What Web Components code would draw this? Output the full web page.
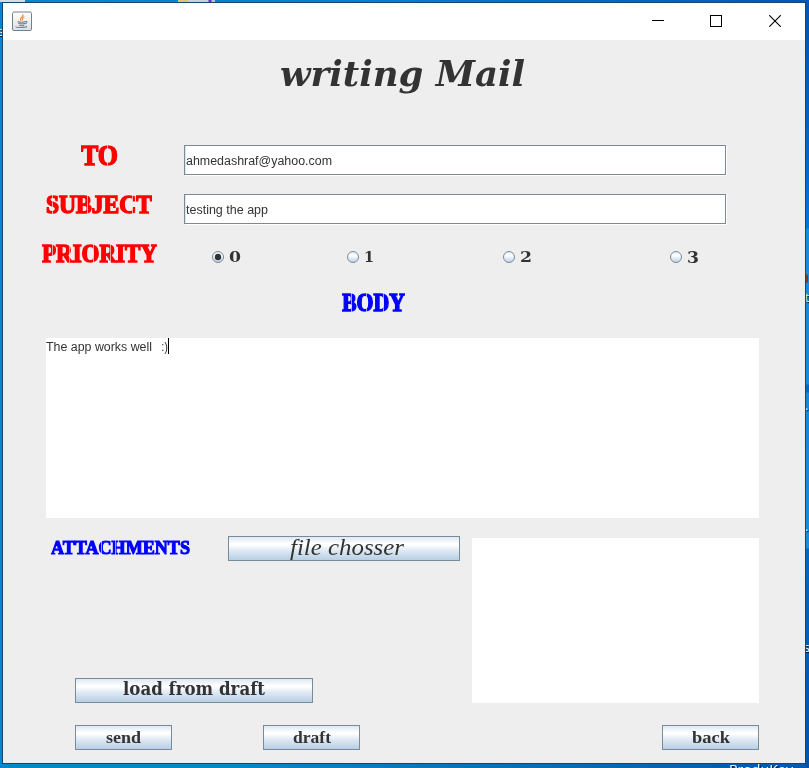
<!DOCTYPE html>
<html lang="en"><head><meta charset="utf-8"><title>writing Mail</title>
<style>html,body{margin:0;width:809px;height:768px;overflow:hidden}</style></head>
<body><mail-desktop></mail-desktop>
<script>
function define(name, html, ready){
  customElements.define(name, class extends HTMLElement{
    connectedCallback(){
      if(this.shadowRoot) return;
      this.attachShadow({mode:'open'}).innerHTML=html;
      if(ready) ready(this,this.shadowRoot);
    }
  });
}

// Text stretched horizontally to a given width; optional stencil cuts in px.
define('fit-text',`<style>
:host{display:block;height:var(--line,25px);line-height:var(--line,25px);white-space:pre;flex:none}
span{display:inline-block;transform-origin:0 50%}
</style><span><slot></slot></span>`,(el,root)=>{
  const s=root.querySelector('span'), w=+el.getAttribute('w');
  el.style.width=w+'px';
  if(el.hasAttribute('size')) el.style.fontSize=el.getAttribute('size')+'px';
  const k=w/s.getBoundingClientRect().width;
  s.style.transform='scaleX('+k+')';
  const cuts=(el.getAttribute('cuts')||'').split(' ').filter(Boolean).map(Number);
  if(cuts.length){
    let stops=['#000 0'];
    cuts.forEach(c=>stops.push('#000 '+(c-.5)+'px','rgba(0,0,0,.35) '+(c-.5)+'px','rgba(0,0,0,.35) '+(c+.5)+'px','#000 '+(c+.5)+'px'));
    el.style.maskImage='linear-gradient(90deg,'+stops.join(',')+')';
  }
});

define('stencil-label',`<style>
:host{display:block;flex:none;font-family:"Liberation Serif",serif;font-weight:700;-webkit-text-stroke:1.5px currentColor;color:#f00}
:host([blue]){color:#00f}
</style><slot></slot>`);

define('text-field',`<style>
:host{display:flex;align-items:center;box-sizing:border-box;width:542px;height:30px;border:1px solid #7a8a99;box-shadow:1px 1px #fff,inset 1px 0 #dfe6ee;background:#fff;padding:3px 0 0 1px;font:12px "Liberation Sans",sans-serif;color:#333;flex:none}
</style><slot></slot>`);

define('radio-option',`<style>
:host{display:flex;align-items:center;gap:5px;height:14px;flex:none;font:bold 15px "DejaVu Serif",serif;color:#333}
svg{display:block;width:12px;height:12px;flex:none}
.dot{display:none}:host([checked]) .dot{display:block}
</style><svg viewBox="0 0 12 12"><defs><linearGradient id="g" x2="0" y2="1"><stop stop-color="#dde8f3"/><stop offset=".35" stop-color="#fff"/><stop offset="1" stop-color="#b8cfe5"/></linearGradient></defs><circle cx="6" cy="6" r="5.5" fill="url(#g)" stroke="#7a8a99"/><circle class="dot" cx="6" cy="6" r="3.2" fill="#333"/></svg><slot></slot>`);

define('metal-button',`<style>
:host{display:flex;justify-content:center;box-sizing:border-box;width:97px;height:25px;border:1px solid #7a8a99;background:linear-gradient(#dde8f3 0,#fff 30%,#fff 34%,#dde8f3 60%,#b8cfe5 100%);font:bold 17.5px "Liberation Serif",serif;color:#333;flex:none}
</style><slot></slot>`);

define('title-bar',`<style>
:host{display:flex;height:37px;background:#fff;align-items:center;justify-content:space-between;padding:0 24px 0 9px;box-sizing:border-box}
svg{display:block}.tools{display:flex;gap:46px;margin-bottom:1px}.tools svg:last-child{margin-left:1px}
</style>
<svg width="20" height="20" viewBox="0 0 20 20" style="margin-bottom:2px"><defs><linearGradient id="j" x2="0" y2="1"><stop stop-color="#fff"/><stop offset="1" stop-color="#dedfe1"/></linearGradient></defs><rect x=".5" y="1" width="19" height="18.5" rx="1.5" fill="url(#j)" stroke="#70808c"/><path d="M10.5 3.5c2 2-3 3-2 5.2.3.8.8 1 .8 1M12.5 6c-3 1-2.5 2-1.5 3.2" fill="none" stroke="#e98a4b" stroke-width="1.2"/><path d="M5.5 10.5c2 .8 6 .8 8 0M6.2 12.3c2 .7 5 .7 7 0M7 14.2c1.6.6 4 .6 5.4 0M13.5 10.5c2-.5 2 1.8-.5 2.4M4 15.5c-.5 1.3 9 1.5 11 0" fill="none" stroke="#68889f" stroke-width="1.1"/></svg>
<div class="tools">
<svg width="12" height="12" shape-rendering="crispEdges"><path d="M0 5.5h12" stroke="#000"/></svg>
<svg width="12" height="12" shape-rendering="crispEdges"><path d="M.5.5h11v11H.5z" fill="none" stroke="#000"/></svg>
<svg width="12" height="12"><path d="M.2.2l11.6 11.6M11.8.2L.2 11.8" stroke="#000" stroke-width="1.1"/></svg></div>`);

define('mail-form',`<style>
:host{display:flex;flex-direction:column;height:723px;background:#eee;color:#333}
.title{height:95px;display:flex;padding-left:277px;font:italic bold 36px "DejaVu Serif",serif;--line:67px}
.row{display:flex;height:49px;box-sizing:border-box;flex:none}
.row text-field{margin-top:9px}
.label{width:181px;box-sizing:border-box;--line:40px;flex:none}
.radios{display:grid;grid-template-columns:135px 156px 167px 80px;padding:16px 0 0 28px}
.body{height:180px;width:713px;margin-left:43px;background:#fff;box-sizing:border-box;display:flex;font:12px "Liberation Sans",sans-serif;--line:19px;flex:none}
.caret{width:1px;height:16px;background:#000}
.attach{display:grid;grid-template-columns:177px 244px 287px;padding:18px 0 0 48px;height:185px;box-sizing:border-box;flex:none}
.left{grid-column:1/3;display:flex;flex-direction:column;justify-content:space-between}
.choose{display:flex}
.files{margin-top:2px;background:#fff}
.bottom{display:flex;padding:22px 0 0 72px;--line:23px}
</style>
<div class="title"><fit-text w="245">writing Mail</fit-text></div>
<div class="row" style="height:50px"><stencil-label class="label" style="padding-left:78px"><fit-text w="37" size="29" cuts="27">TO</fit-text></stencil-label><text-field style="margin-top:10px"><fit-text w="146">ahmedashraf@yahoo.com</fit-text></text-field></div>
<div class="row"><stencil-label class="label" style="padding-left:43px"><fit-text w="106" size="25" cuts="7 42 87">SUBJECT</fit-text></stencil-label><text-field><fit-text w="82">testing the app</fit-text></text-field></div>
<div class="row"><stencil-label class="label" style="padding-left:39px"><fit-text w="115" size="25" cuts="10 27 51 68">PRIORITY</fit-text></stencil-label>
<div class="radios"><radio-option checked><fit-text w="12">0</fit-text></radio-option><radio-option><fit-text w="10">1</fit-text></radio-option><radio-option><fit-text w="12">2</fit-text></radio-option><radio-option><fit-text w="12" size="16" style="--line:27px">3</fit-text></radio-option></div></div>
<div class="row" style="height:55px;padding-left:339px"><stencil-label blue style="--line:40px"><fit-text w="63" size="25" cuts="10 25 42">BODY</fit-text></stencil-label></div>
<div class="body"><fit-text w="106">The app works well</fit-text><fit-text w="16">   :)</fit-text><span class="caret"></span></div>
<div class="attach"><div class="left"><div class="choose"><stencil-label blue style="width:177px;--line:24px;-webkit-text-stroke-width:1.1px"><fit-text w="139" size="19" cuts="51 65">ATTACHMENTS</fit-text></stencil-label><metal-button style="width:232px;padding-left:5px;font:italic 24px 'Liberation Serif',serif;--line:20px"><fit-text w="114">file chosser</fit-text></metal-button></div>
<metal-button style="width:238px;margin-left:24px;font:bold 18px 'DejaVu Serif',serif;--line:20px"><fit-text w="142">load from draft</fit-text></metal-button></div><div class="files"></div></div>
<div class="bottom"><metal-button><fit-text w="35">send</fit-text></metal-button><metal-button style="margin-left:91px"><fit-text w="38">draft</fit-text></metal-button><metal-button style="margin-left:302px"><fit-text w="38">back</fit-text></metal-button></div>`);

define('mail-desktop',`<style>
:host{display:block;position:relative;width:809px;height:768px;box-sizing:border-box;padding:2px;overflow:hidden;background:
linear-gradient(#0057b8 0 30px,#0067c8 150px,#0078d8 228px,#168fdb 229px,#168bd9 384px,#0069c2 385px 392px,#1688d8 393px,#1690d8 548px,#0068c4 549px,#0052ad) 805px 0/4px 100% no-repeat,
linear-gradient(#0087d5,#0088ce) 0 0/3px 100% no-repeat,
linear-gradient(90deg,#0089d5,#007ed3 50%,#0056ba) 0 0/100% 3px no-repeat,
linear-gradient(90deg,#0088c9,#0088c9 30%,#0058b1) 0 763px/100% 5px no-repeat,#0078cb}
.window{position:relative;border:1px solid #1d4462;width:802px;height:760px}
.icon{position:absolute;top:0;height:2px}
.under{position:absolute;color:#fff;font:12px/16px "Open Sans",sans-serif;text-shadow:1px 1px 1px #000}
.dark{position:absolute;left:806px;width:3px}
</style>
<div class="icon" style="left:0;width:25px;background:#d9dcdf"></div><div class="icon" style="left:178px;width:37px;background:linear-gradient(90deg,#d9c584 10px,#cbd1dc 11px 30px,#4940cf 31px 33px,#bdbfd3 34px)"></div>
<div class="under" style="left:729px;top:761px;font-size:13px"><fit-text w="64" style="--line:16px">ProduKey</fit-text></div>
<div class="under" style="left:-2px;top:24px">s</div>
<div class="under" style="left:805px;top:290px;color:#f2efb0">t</div>
<div class="under" style="left:805px;top:398px">.</div><div class="under" style="left:805px;top:519px">.</div><div class="under" style="left:804px;top:640px">s</div>
<div class="dark" style="top:274px;height:9px;background:#763b29;border-radius:0 4px 4px 0;width:2px"></div>
<div class="window"><title-bar></title-bar><mail-form></mail-form></div>`);
</script></body></html>
